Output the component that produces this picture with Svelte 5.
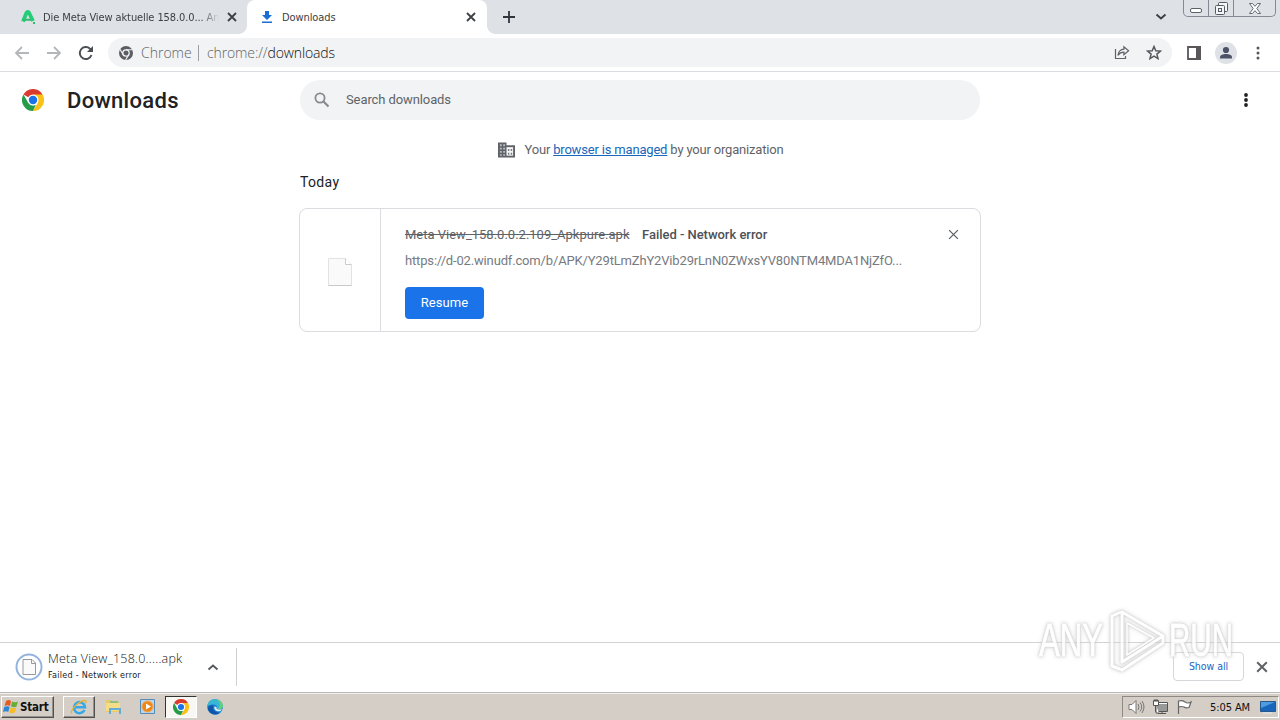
<script>
  let query = ""

  const item = {
    name: "Meta View_158.0.0.2.109_Apkpure.apk",
    shortName: "Meta View_158.0.....apk",
    status: "Failed - Network error",
    url: "https://d-02.winudf.com/b/APK/Y29tLmZhY2Vib29rLnN0ZWxsYV80NTM4MDA1NjZfO...",
  }
</script>

{#snippet chromeLogo(size)}
  <svg width={size} height={size} viewBox="0 0 24 24">
    <path d="M12 12 1.6 6A12 12 0 0 1 22.4 6Z" fill="#db3b2e" />
    <path d="M12 6h10.4A12 12 0 0 1 12 24l5.2-9Z" fill="#fbc116" />
    <path d="M1.6 6 6.8 15 12 18l3.2-.8L12 24A12 12 0 0 1 1.6 6Z" fill="#269b48" />
    <circle cx="12" cy="12" r="6" fill="#fff" />
    <circle cx="12" cy="12" r="4.6" fill="#1a73e8" />
  </svg>
{/snippet}

{#snippet cross(size, color, width)}
  <svg width={size} height={size} viewBox="0 0 10 10">
    <path d="m1 1 8 8M9 1 1 9" stroke={color} stroke-width={width} fill="none" />
  </svg>
{/snippet}

<div class="screen">
  <header class="tabs">
    <div class="tab first">
      <svg width="16" height="16" viewBox="0 0 16 16">
        <path d="M3 12.5 6.4 4Q7.3 2 9 3.7L13 12" fill="none" stroke="#24cd77" stroke-width="3.8" stroke-linejoin="round" />
        <path d="M3 10.7h8M13 14h2" stroke="#35b96d" stroke-width="2" />
      </svg>
      <span class="tab-title fade">Die Meta View aktuelle 158.0.0... An</span>
      <button class="plain">{@render cross(10, "#3c4043", 1.8)}</button>
    </div>
    <div class="tab active">
      <svg width="12" height="14" viewBox="0 0 12 14">
        <path d="M4 1h4v4h3L6 10 1 5h3zM1 11.5h10V13H1z" fill="#1a6dd5" />
      </svg>
      <span class="tab-title">Downloads</span>
      <button class="plain">{@render cross(10, "#3c4043", 1.8)}</button>
    </div>
    <button class="plain new-tab">
      <svg width="12" height="12" viewBox="0 0 12 12"><path d="M6 0v12M0 6h12" stroke="#30343c" stroke-width="1.8" /></svg>
    </button>
    <svg class="chevron" width="12" height="8" viewBox="0 0 12 8"><path d="m1.5 1.5 4.5 4 4.5-4" fill="none" stroke="#3c4043" stroke-width="1.9" /></svg>
    <div class="window-buttons">
      <span class="minimize"><svg width="13" height="6" viewBox="0 0 13 6"><rect x=".5" y=".5" width="11" height="4" rx="1.5" fill="#fff" stroke="#5c6069" /></svg></span>
      <span class="restore"><svg width="13" height="13" viewBox="0 0 13 13" fill="#f5f6f8" stroke="#555a63"><rect x="3.5" y=".5" width="9" height="9" rx="1" /><rect x=".5" y="3.5" width="9" height="9" rx="1" /><rect x="3.5" y="6.5" width="3" height="3" /></svg></span>
      <span class="close"><svg width="12" height="11" viewBox="0 0 12 11"><path d="M.5.5h3L6 3.3 8.5.5h3L7.8 5.5l3.7 5h-3L6 7.7 3.5 10.5h-3l3.7-5Z" fill="#fff" stroke="#666b75" /></svg></span>
    </div>
  </header>

  <nav class="toolbar">
    <svg class="nav-icon" width="16" height="14" viewBox="0 0 16 14"><path d="M15 7H2M8 1 2 7l6 6" fill="none" stroke="#b5b6b8" stroke-width="1.8" /></svg>
    <svg class="nav-icon" width="16" height="14" viewBox="0 0 16 14"><path d="M1 7h13M8 1l6 6-6 6" fill="none" stroke="#b5b6b8" stroke-width="1.8" /></svg>
    <svg class="nav-icon" width="16" height="16" viewBox="0 0 16 16">
      <path d="M13.5 10A6 6 0 1 1 12 3.7L14 5.7" fill="none" stroke="#4b4e52" stroke-width="1.9" />
      <path d="M15 1v6H9z" fill="#4b4e52" />
    </svg>
    <div class="omnibox">
      <svg width="14" height="14" viewBox="0 0 14 14">
        <circle cx="7" cy="7" r="7" fill="#5a5d61" />
        <circle cx="7" cy="7" r="3.2" fill="#5a5d61" stroke="#f1f3f4" stroke-width="1.3" />
        <path d="M7 3.8h6.5M4.2 8.6 1 3.2M9.8 8.6l-3.2 5.3" stroke="#f1f3f4" stroke-width="1.1" />
      </svg>
      <span class="origin">Chrome</span>
      <span class="address">chrome://<b>downloads</b></span>
      <svg class="share" width="16" height="15" viewBox="0 0 16 15" fill="none" stroke="#5f6368" stroke-width="1.2">
        <path d="M1.5 4v9.5h10V11" />
        <path d="M3.9 10.3C4.5 6.7 6.4 4.5 9.9 4.2V1.8l4.7 3.9-4.7 3.9V7.2C7 7.2 5.4 8.3 3.9 10.3Z" />
      </svg>
      <svg width="16" height="15" viewBox="0 0 16 15"><path d="m8 1.5 1.8 4.2 4.6.4-3.5 3 1.1 4.5L8 11.2l-4 2.4 1.1-4.5-3.5-3 4.6-.4Z" fill="none" stroke="#55585d" stroke-width="1.5" /></svg>
    </div>
    <svg class="panel" width="14" height="14" viewBox="0 0 14 14"><path d="M1 1h12v12H1z" fill="none" stroke="#5a5659" stroke-width="1.8" /><path d="M9 0h5v14H9z" fill="#5a5659" /></svg>
    <svg class="avatar" width="22" height="22" viewBox="0 0 22 22"><circle cx="11" cy="11" r="11" fill="#dee1e6" /><circle cx="11" cy="8" r="3.1" fill="#4b5268" /><path d="M5 16.5v-1.2c0-2 3-3.2 6-3.2s6 1.2 6 3.2v1.2z" fill="#4b5268" /></svg>
    <svg width="4" height="14" viewBox="0 0 4 14" fill="#55585c"><circle cx="2" cy="2" r="1.5" /><circle cx="2" cy="7" r="1.5" /><circle cx="2" cy="12" r="1.5" /></svg>
  </nav>

  <main>
    <div class="page-header">
      <div class="brand">
        {@render chromeLogo(22)}
        <h1>Downloads</h1>
      </div>
      <label class="search">
        <svg width="16" height="16" viewBox="0 0 16 16" fill="none" stroke="#878b8f"><circle cx="6" cy="6" r="4.6" stroke-width="1.8" /><path d="m9.5 9.5 5 5" stroke-width="2.2" /></svg>
        <input bind:value={query} placeholder="Search downloads" />
      </label>
      <svg class="more" width="4" height="14" viewBox="0 0 4 14" fill="#202124"><circle cx="2" cy="2" r="1.9" /><circle cx="2" cy="7" r="1.9" /><circle cx="2" cy="12" r="1.9" /></svg>
    </div>

    <div class="managed">
      <svg width="17" height="16" viewBox="0 0 18 16">
        <path d="M0 0h9v3h9v13H0z" fill="#5f6368" />
        <path d="M2 2h2v2H2zm3.5 0h2v2h-2zM2 5.5h2v2H2zm3.5 0h2v2h-2zM2 9h2v2H2zm3.5 0h2v2h-2zM2 12.5h2v1.7H2zm3.5 0h2v1.7h-2z" fill="#b9bcc0" />
        <path d="M9 5h7v9H9z" fill="#f4f5f6" />
        <path d="M10.5 7H12v2h-1.5zm3 0H15v2h-1.5zm-3 4H12v2h-1.5zm3 0H15v2h-1.5z" fill="#777b80" />
      </svg>
      <span>Your <a href="#managed">browser is managed</a> by your organization</span>
    </div>

    <section>
      <h2>Today</h2>
      <article class="card">
        <div class="thumb">
          <svg width="24" height="28" viewBox="0 0 24 28"><path d="M.5.5h17l6 6v21H.5Z" fill="#fafafa" stroke="#e2e2e2" /><path d="M17.5.5v6h6" fill="#fff" stroke="#ccc" /><path d="M.5 27.5h23" stroke="#c9c9c9" /></svg>
        </div>
        <div class="details">
          <div class="title"><s>{item.name}</s><span class="status">{item.status}</span></div>
          <div class="url">{item.url}</div>
          <button class="resume">Resume</button>
        </div>
        <button class="plain remove">{@render cross(11, "#5f6368", 1.2)}</button>
      </article>
    </section>
  </main>

  <footer class="shelf">
    <svg width="28" height="28" viewBox="0 0 28 28">
      <circle cx="14" cy="14" r="12.5" fill="#fff" stroke="#94b4dd" stroke-width="2" />
      <path d="M8 6.5h9l3.5 3.5v11.5H8Z" fill="#fafafa" stroke="#999" /><path d="M16.5 6.5v4h4" fill="none" stroke="#999" />
    </svg>
    <div class="shelf-text">
      <span class="shelf-name">{item.shortName}</span>
      <span class="shelf-status">{item.status}</span>
    </div>
    <svg width="12" height="8" viewBox="0 0 12 8"><path d="m1.5 6.5 4.5-4 4.5 4" fill="none" stroke="#55585c" stroke-width="1.8" /></svg>
    <div class="divider"></div>
    <button class="show-all">Show all</button>
    <button class="plain">{@render cross(12, "#5f6368", 1.7)}</button>
  </footer>

  <div class="taskbar">
    <button class="start">
      <svg width="17" height="16" viewBox="0 0 17 16">
        <path d="M3 2q3-2 5 0L7 7Q4 5.5 1.5 7Z" fill="#e65b22" />
        <path d="M9 2.5q3 1.5 6 0l-1.5 5Q11 9 8 7.5Z" fill="#69ad38" />
        <path d="M1.2 8q3-1.5 5.5 0l-1.5 5Q3 11.5 0 13Z" fill="#2d86d3" />
        <path d="M7.7 8.5q3 1.5 5.5 0l-1.5 5q-3 1.5-5.5 0Z" fill="#f7bd25" />
      </svg>
      <span>Start</span>
    </button>
    <div class="task raised">
      <svg width="18" height="18" viewBox="0 0 18 18">
        <path d="M14.5 12A5.5 5.5 0 1 1 15 9.2H5" fill="none" stroke="#35a8e5" stroke-width="2.5" />
        <path d="M1.5 15.5C0 12 9 3 14.5 2.5c2.5 0 1.5 2 .8 3" fill="none" stroke="#e4b332" stroke-width="1.3" />
      </svg>
    </div>
    <div class="task">
      <svg width="16" height="16" viewBox="0 0 16 16"><path d="M0 1h6l1 2h7v10H0z" fill="#e9c867" /><path d="M4 2h8v3H4z" fill="#8ebf86" /><path d="M0 4h14v8H0z" fill="#f4dd86" /><path d="M4 15v-5h10v5" fill="none" stroke="#65add5" stroke-width="2" /></svg>
    </div>
    <div class="task">
      <svg width="16" height="16" viewBox="0 0 16 16"><path d="M.5.5h14v14H.5z" fill="#b9d6ef" stroke="#568bb7" /><circle cx="7.5" cy="7.5" r="5.5" fill="#ef8716" stroke="#f5a84f" /><path d="m6 4.500 5 3-5 3z" fill="#fff" /></svg>
    </div>
    <div class="task pressed">{@render chromeLogo(16)}</div>
    <div class="task">
      <svg width="16" height="16" viewBox="0 0 16 16">
        <circle cx="8" cy="8" r="7.8" fill="#1681d3" />
        <path d="M.5 7C1 2 4 .2 8 .2c5 0 8 3.5 7.8 7.3C15 11 10 11 9.5 9.5c1-1 .8-4-2.500-4C4 5.5 1.5 6 .5 7Z" fill="#38b7d4" />
        <path d="M10 .5c4 1 6 4 5.8 7-.5 2.5-3 3-5 2.7C14 8 13 3 10 .5Z" fill="#66cf77" />
        <path d="M6.5 6.5c-2 3 .5 7 6.500 7.2C8 17.5 1 14 1 9c1-2 3-3 5.5-2.5Z" fill="#1254a5" />
        <path d="M9.5 8c-.8 2 1.7 3.2 5.5 2.3L13.5 12C10 13 6.5 11 7.5 7.5Z" fill="#e6edf0" />
      </svg>
    </div>
    <div class="tray">
      <svg width="17" height="16" viewBox="0 0 17 16" fill="none" stroke="#777"><path d="M1 5.5h3l4-4v13l-4-4H1Z" fill="#fff" /><path d="M10 5q2 3 0 6M12 3.5q3.5 4.5 0 9M14 2q4 6 0 12" /></svg>
      <svg width="17" height="16" viewBox="0 0 17 16" stroke="#555"><path d="M4.5 4.5h11v8h-11z" fill="#999" stroke="#fff" /><path d="M3.5 3.5h12v9h-12zM6 14.5h8M10 12v3" fill="none" /><path d="M1.5 1.5h5v5h-5zM4 6v8h3" fill="#fff" /><path d="M3 0v3M5 0v3" /></svg>
      <svg width="17" height="16" viewBox="0 0 17 16"><path d="M2.5 15V1.5M3 2q3-1 6 1 3 2 6 0-1 3-2 5.5-3 1-5-.5-3-1-5 0" fill="#fff" stroke="#666" stroke-width="1.2" /></svg>
      <span class="clock">5:05 AM</span>
      <svg width="16" height="14" viewBox="0 0 16 14"><path d="M.5 1.5h15v10H.5z" fill="#1766bb" stroke="#28588b" /><path d="M1 2h14L1 8z" fill="#4c9ce1" /><path d="M3 13h9" stroke="#e1eaf2" /></svg>
    </div>
  </div>

  <svg class="watermark" width="220" height="80" viewBox="0 0 220 80">
    <g font-family="Liberation Sans, Arial, sans-serif" font-size="46" fill="#fff" stroke="#fff" stroke-width=".8">
      <text x="8" y="52" textLength="64" lengthAdjust="spacingAndGlyphs">ANY</text>
      <text x="138" y="52" textLength="64" lengthAdjust="spacingAndGlyphs">RUN</text>
    </g>
    <g fill="none" stroke="#fff" stroke-width="3" stroke-linejoin="round">
      <path d="M91 8 132 32 91 58Z" />
      <path d="M90 8 81 12v50l10 4 41-27v-7" />
      <path d="M96 19 123 34 96 51Z" stroke-width="1.5" />
    </g>
  </svg>
</div>

<style>
  :global(body) {
    margin: 0;
    background: #fff;
    overflow: hidden;
  }
  .screen {
    position: relative;
    width: 1280px;
    height: 720px;
    display: flex;
    flex-direction: column;
    font-family: Roboto, sans-serif;
    color: #202124;
  }
  .screen * {
    box-sizing: border-box;
  }
  svg {
    display: block;
    flex: none;
  }
  button {
    font-family: inherit;
  }
  .plain {
    padding: 0;
    border: 0;
    background: none;
  }
  .tabs {
    height: 34px;
    display: flex;
    background: #dee1e6;
    font-family: "DejaVu Sans Condensed", "DejaVu Sans", sans-serif;
    font-size: 11px;
  }
  .tab {
    height: 34px;
    display: flex;
    align-items: center;
    color: #3c4043;
    white-space: nowrap;
  }
  .tab .plain {
    margin-left: auto;
  }
  .first {
    width: 247px;
    padding: 0 10px 0 20px;
  }
  .fade {
    width: 176px;
    margin-left: 7px;
    overflow: hidden;
    letter-spacing: -0.1px;
    mask-image: linear-gradient(to right, #000 158px, transparent);
  }
  .active {
    position: relative;
    width: 240px;
    padding: 0 11px 0 14px;
    border-radius: 8px 8px 0 0;
    background: #fff;
  }
  /* curved feet of the active tab */
  .active::before,
  .active::after {
    content: "";
    position: absolute;
    bottom: 0;
    width: 8px;
    height: 8px;
  }
  .active::before {
    left: -8px;
    background: radial-gradient(circle at 0 0, transparent 7.5px, #fff 8px);
  }
  .active::after {
    right: -8px;
    background: radial-gradient(circle at 100% 0, transparent 7.5px, #fff 8px);
  }
  .active .tab-title {
    margin-left: 9px;
    letter-spacing: -0.1px;
  }
  .new-tab {
    margin-left: 16px;
  }
  .chevron {
    margin: 13px 16px 0 auto;
  }
  .window-buttons {
    width: 93px;
    height: 17px;
    margin-right: 4px;
    display: flex;
    border: 1px solid #858994;
    border-top: 0;
    border-radius: 0 0 5px 5px;
  }
  .window-buttons span {
    display: flex;
    justify-content: center;
  }
  .minimize {
    width: 25px;
    padding-top: 8px;
    border-right: 1px solid #858994;
  }
  .restore {
    width: 25px;
    padding-top: 2px;
    border-right: 1px solid #858994;
  }
  .close {
    flex: 1;
    padding-top: 3px;
  }
  .toolbar {
    height: 38px;
    display: flex;
    align-items: center;
    padding: 0 20px 0 14px;
    border-bottom: 1px solid #dadce0;
  }
  .nav-icon {
    margin-right: 16px;
  }
  .omnibox {
    width: 1064px;
    flex: none;
    height: 29px;
    margin-left: -2px;
    padding: 0 10px 0 11px;
    display: flex;
    align-items: center;
    border-radius: 15px;
    background: #f1f3f4;
    color: #5f6368;
    font: 300 14px "Open Sans", sans-serif;
  }
  .origin {
    width: 58px;
    margin-left: 8px;
    border-right: 1px solid #9aa0a6;
    line-height: 16px;
  }
  .address {
    margin-left: 8px;
    letter-spacing: -0.12px;
  }
  .address b {
    color: #111;
    font-weight: 300;
  }
  .share {
    margin: 0 16px 0 auto;
  }
  .panel {
    margin: 0 14px 0 15px;
  }
  .avatar {
    margin-right: auto;
  }
  main {
    height: 570px;
  }
  .page-header {
    height: 56px;
    padding: 0 32px 0 22px;
    display: flex;
    align-items: center;
  }
  .brand {
    width: 278px;
    display: flex;
    align-items: center;
  }
  h1 {
    margin: 0 0 0 23px;
    font-size: 22px;
    font-weight: 500;
    letter-spacing: 0.3px;
  }
  .search {
    width: 680px;
    height: 40px;
    display: flex;
    align-items: center;
    padding-left: 14px;
    border-radius: 20px;
    background: #f1f3f4;
  }
  .search input {
    width: 500px;
    margin: 0 0 2px 16px;
    padding: 0;
    border: 0;
    outline: 0;
    background: none;
    font: 13px Roboto, sans-serif;
    letter-spacing: -0.1px;
  }
  .search input::placeholder {
    color: #5f6368;
  }
  .more {
    margin-left: auto;
  }
  .managed {
    height: 44px;
    padding: 0 0 1px 2px;
    display: flex;
    align-items: center;
    justify-content: center;
    gap: 9px;
    color: #5f6368;
    font-size: 13px;
    letter-spacing: -0.18px;
  }
  .managed a {
    color: #1967ba;
  }
  section {
    width: 682px;
    margin: 0 auto;
  }
  h2 {
    height: 36px;
    margin: 0 0 0 1px;
    font-size: 14px;
    font-weight: 400;
    line-height: 21px;
    letter-spacing: 0.35px;
  }
  .card {
    height: 124px;
    display: flex;
    border: 1px solid #dadce0;
    border-radius: 8px;
  }
  .thumb {
    width: 81px;
    padding-top: 3px;
    display: flex;
    align-items: center;
    justify-content: center;
    border-right: 1px solid #dadce0;
  }
  .details {
    width: 540px;
    padding: 17px 0 0 24px;
    font-size: 13px;
    white-space: nowrap;
  }
  .title {
    height: 18px;
    line-height: 18px;
    color: #5f6368;
    font-weight: 500;
  }
  s {
    display: inline-block;
    width: 225px;
    font-weight: 400;
  }
  .status {
    margin-left: 12px;
    color: #4e5155;
    letter-spacing: -0.03px;
  }
  .url {
    margin-top: 8px;
    line-height: 18px;
    color: #777a7f;
    letter-spacing: -0.16px;
  }
  .resume {
    width: 79px;
    height: 32px;
    margin-top: 17px;
    padding: 0 0 2px;
    border: 0;
    border-radius: 4px;
    background: #1a73e8;
    color: #fff;
    font-size: 13px;
    letter-spacing: 0.1px;
  }
  .remove {
    align-self: flex-start;
    margin: 20px 0 0 27px;
  }
  .shelf {
    height: 51px;
    padding: 0 12px 2px 15px;
    display: flex;
    align-items: center;
    border-top: 1px solid #d1d3d6;
    border-bottom: 1px solid #b8b8b8;
  }
  .shelf-text {
    width: 159px;
    margin-left: 5px;
    display: flex;
    flex-direction: column;
    white-space: nowrap;
  }
  .shelf-name {
    font: 300 12.5px/18px "Open Sans", sans-serif;
    letter-spacing: 0.22px;
    color: #111;
  }
  .shelf-status {
    font: 9px/15px "DejaVu Sans Condensed", sans-serif;
    letter-spacing: 0.25px;
  }
  .divider {
    width: 1px;
    height: 38px;
    margin-left: 17px;
    background: #cfd1d4;
  }
  .show-all {
    width: 71px;
    height: 29px;
    margin: 0 12px 0 auto;
    padding: 0 0 2px;
    border: 1px solid #d5d7da;
    border-radius: 4px;
    background: #fff;
    color: #1967c2;
    font: 10.5px "DejaVu Sans Condensed", sans-serif;
    letter-spacing: -0.05px;
  }
  .taskbar {
    height: 27px;
    padding: 2px 1px;
    display: flex;
    gap: 3px;
    border-top: 1px solid #f3f1ee;
    background: #d5cec7;
  }
  .start,
  .raised {
    border: 1px solid;
    border-color: #fff #515151 #515151 #fff;
    box-shadow: inset -1px -1px #96908a;
    background: #d5cec7;
  }
  .start {
    width: 53px;
    height: 22px;
    margin-right: 6px;
    padding: 0 0 0 1px;
    display: flex;
    align-items: center;
    font: bold 11.5px "DejaVu Sans Condensed", sans-serif;
    letter-spacing: -0.2px;
    color: #111;
  }
  .task {
    width: 31px;
    height: 22px;
    display: flex;
    align-items: center;
    justify-content: center;
  }
  .raised {
    width: 32px;
  }
  .pressed {
    width: 32px;
    margin-left: -1px;
    margin-right: -1px;
    border: 1px solid;
    border-color: #333 #fff #fff #333;
    background: #f8f7f4;
  }
  .tray {
    width: 157px;
    height: 22px;
    margin-left: auto;
    padding: 0 2px 0 5px;
    display: flex;
    align-items: center;
    gap: 7px;
    border: 1px solid;
    border-color: #8f8983 #fff #fff #8f8983;
  }
  .clock {
    margin: 0 3px 0 auto;
    white-space: nowrap;
    font: 11px "DejaVu Sans Condensed", sans-serif;
    letter-spacing: -0.1px;
    color: #111;
  }
  .watermark {
    position: absolute;
    left: 1031px;
    top: 604px;
    opacity: 0.82;
    pointer-events: none;
    filter: drop-shadow(0 0 1px #bbb) drop-shadow(0 0 2px #d5d5d5);
  }
</style>
